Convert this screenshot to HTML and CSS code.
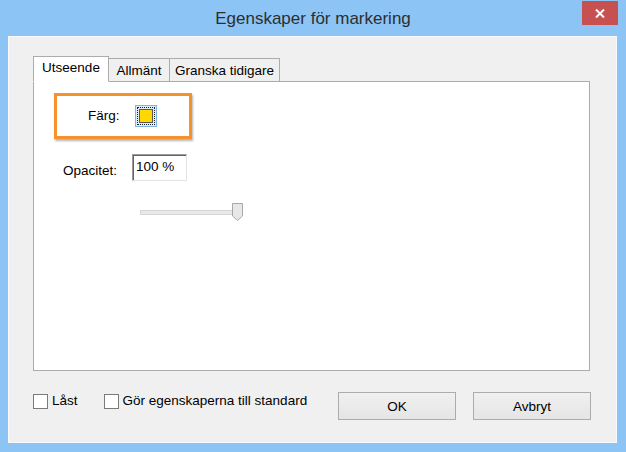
FILE: index.html
```html
<!DOCTYPE html>
<html lang="sv">
<head>
<meta charset="utf-8">
<title>Egenskaper för markering</title>
<link rel="stylesheet" href="styles.css">
</head>
<body>
<div class="window">
  <div class="titlebar">
    <div class="title">Egenskaper för markering</div>
    <div class="close">
      <svg width="10" height="9" viewBox="0 0 10 9"><path d="M1 0.5 L9 8.5 M9 0.5 L1 8.5" stroke="#fff" stroke-width="2" fill="none"/></svg>
    </div>
  </div>
  <div class="client">
    <div class="tabs">
      <div class="tab active tab-utseende">Utseende</div>
      <div class="tab tab-allmant">Allmänt</div>
      <div class="tab tab-granska">Granska tidigare</div>
    </div>
    <div class="panel">
      <div class="highlight">
        <span class="label">Färg:</span>
        <div class="swatch"><div class="focus"><div class="color"></div></div></div>
      </div>
      <div class="opacity-row">
        <span class="opacity-label">Opacitet:</span>
        <div class="textbox">100 %</div>
      </div>
      <div class="slider">
        <div class="track"></div>
        <svg class="thumb" width="11" height="18" viewBox="0 0 11 18"><path d="M0.5 0.5 H10.5 V13 L5.5 17.5 L0.5 13 Z" fill="#e7e7e7" stroke="#a8a8a8"/></svg>
      </div>
    </div>
    <div class="footer">
      <div class="check"><span class="box"></span><span>Låst</span></div>
      <div class="check check-default"><span class="box"></span><span>Gör egenskaperna till standard</span></div>
      <div class="buttons">
        <div class="button">OK</div>
        <div class="button">Avbryt</div>
      </div>
    </div>
  </div>
</div>
</body>
</html>
```
FILE: styles.css
```css
* { box-sizing: border-box; }
html, body { margin: 0; padding: 0; }
body {
  font-family: "Liberation Sans", Arial, sans-serif;
  font-size: 13.5px;
  color: #000;
  background: #8cc4f6;
}
.window {
  width: 626px;
  height: 452px;
  background: #8cc4f6;
  display: flex;
  flex-direction: column;
  overflow: hidden;
}
.titlebar {
  height: 36px;
  display: grid;
  grid-template-columns: 1fr auto 1fr;
}
.title {
  grid-column: 2;
  margin-top: 9px;
  line-height: 20px;
  font-size: 17px;
  color: #2e2e2e;
  white-space: nowrap;
}
.close {
  grid-column: 3;
  justify-self: end;
  align-self: start;
  margin-top: 1px;
  margin-right: 8px;
  width: 36px;
  height: 24px;
  background: #c75050;
  display: flex;
  align-items: center;
  justify-content: center;
}
.client {
  margin-left: 8px;
  width: 609px;
  height: 407px;
  background: #f0f0f0;
  border: 1px solid #f7f9fb;
  display: flex;
  flex-direction: column;
}
.tabs {
  display: flex;
  align-items: flex-end;
  margin-left: 24px;
  margin-top: 19px;
  margin-bottom: -1px;
  position: relative;
  z-index: 1;
  line-height: 16px;
}
.tab {
  height: 24px;
  border: 1px solid #acacac;
  background: #f0f0f0;
  padding-top: 4px;
  text-align: center;
  white-space: nowrap;
}
.tab.active {
  height: 26px;
  padding-top: 3px;
  background: #fff;
  border-bottom-color: #fff;
}
.tab-utseende { width: 76px; }
.tab-allmant { width: 61px; border-left: none; }
.tab-granska { width: 111px; border-left: 1px solid #acacac; margin-left: -1px; }
.panel {
  margin-left: 24px;
  width: 557px;
  height: 290px;
  background: #fff;
  border: 1px solid #acacac;
  line-height: 16px;
}
.highlight {
  margin-left: 20px;
  margin-top: 11px;
  width: 138px;
  height: 46px;
  border: 3px solid #f5922e;
  box-shadow: 1px 2px 2px rgba(0, 0, 0, 0.3);
  display: flex;
  align-items: center;
  padding-left: 31px;
}
.label { margin-right: 15px; }
.swatch {
  width: 22px;
  height: 22px;
  border: 1px solid #7eb4ea;
  background: #dcecfc;
  padding: 1px;
}
.focus {
  width: 18px;
  height: 18px;
  border: 1px dotted #222;
  padding: 1px;
}
.color {
  width: 14px;
  height: 14px;
  background: #ffd800;
  border: 1px solid #5a5a5a;
}
.opacity-row {
  display: flex;
  align-items: flex-start;
  margin-left: 29px;
  margin-top: 15px;
}
.opacity-label {
  margin-top: 9px;
  margin-right: 15px;
}
.textbox {
  width: 55px;
  height: 27px;
  border: 1px solid;
  border-color: #9a9a9a #e3e3e3 #e3e3e3 #9a9a9a;
  box-shadow: inset 1px 1px 0 #646464;
  padding: 4px 0 0 3px;
  background: #fff;
}
.slider {
  display: flex;
  align-items: center;
  margin-left: 106px;
  margin-top: 22px;
  height: 18px;
}
.track {
  width: 94px;
  height: 5px;
  border: 1px solid #d6d6d6;
  background: #e7eaea;
  margin-top: 1px;
}
.thumb {
  display: block;
  margin-left: -2px;
}
.footer {
  display: flex;
  align-items: flex-start;
  margin-top: 21px;
  padding-left: 24px;
  line-height: 16px;
}
.check {
  display: flex;
  align-items: center;
  margin-top: 1px;
  white-space: nowrap;
}
.check-default { margin-left: 26px; }
.box {
  width: 15px;
  height: 15px;
  border: 1px solid #7a7a7a;
  background: #fff;
  margin-right: 4px;
}
.buttons {
  margin-left: auto;
  margin-right: 25px;
  display: flex;
  gap: 17px;
}
.button {
  width: 118px;
  height: 28px;
  border: 1px solid #acacac;
  background: linear-gradient(#f0f0f0, #e5e5e5);
  display: flex;
  align-items: center;
  justify-content: center;
  padding-top: 2px;
}
```
